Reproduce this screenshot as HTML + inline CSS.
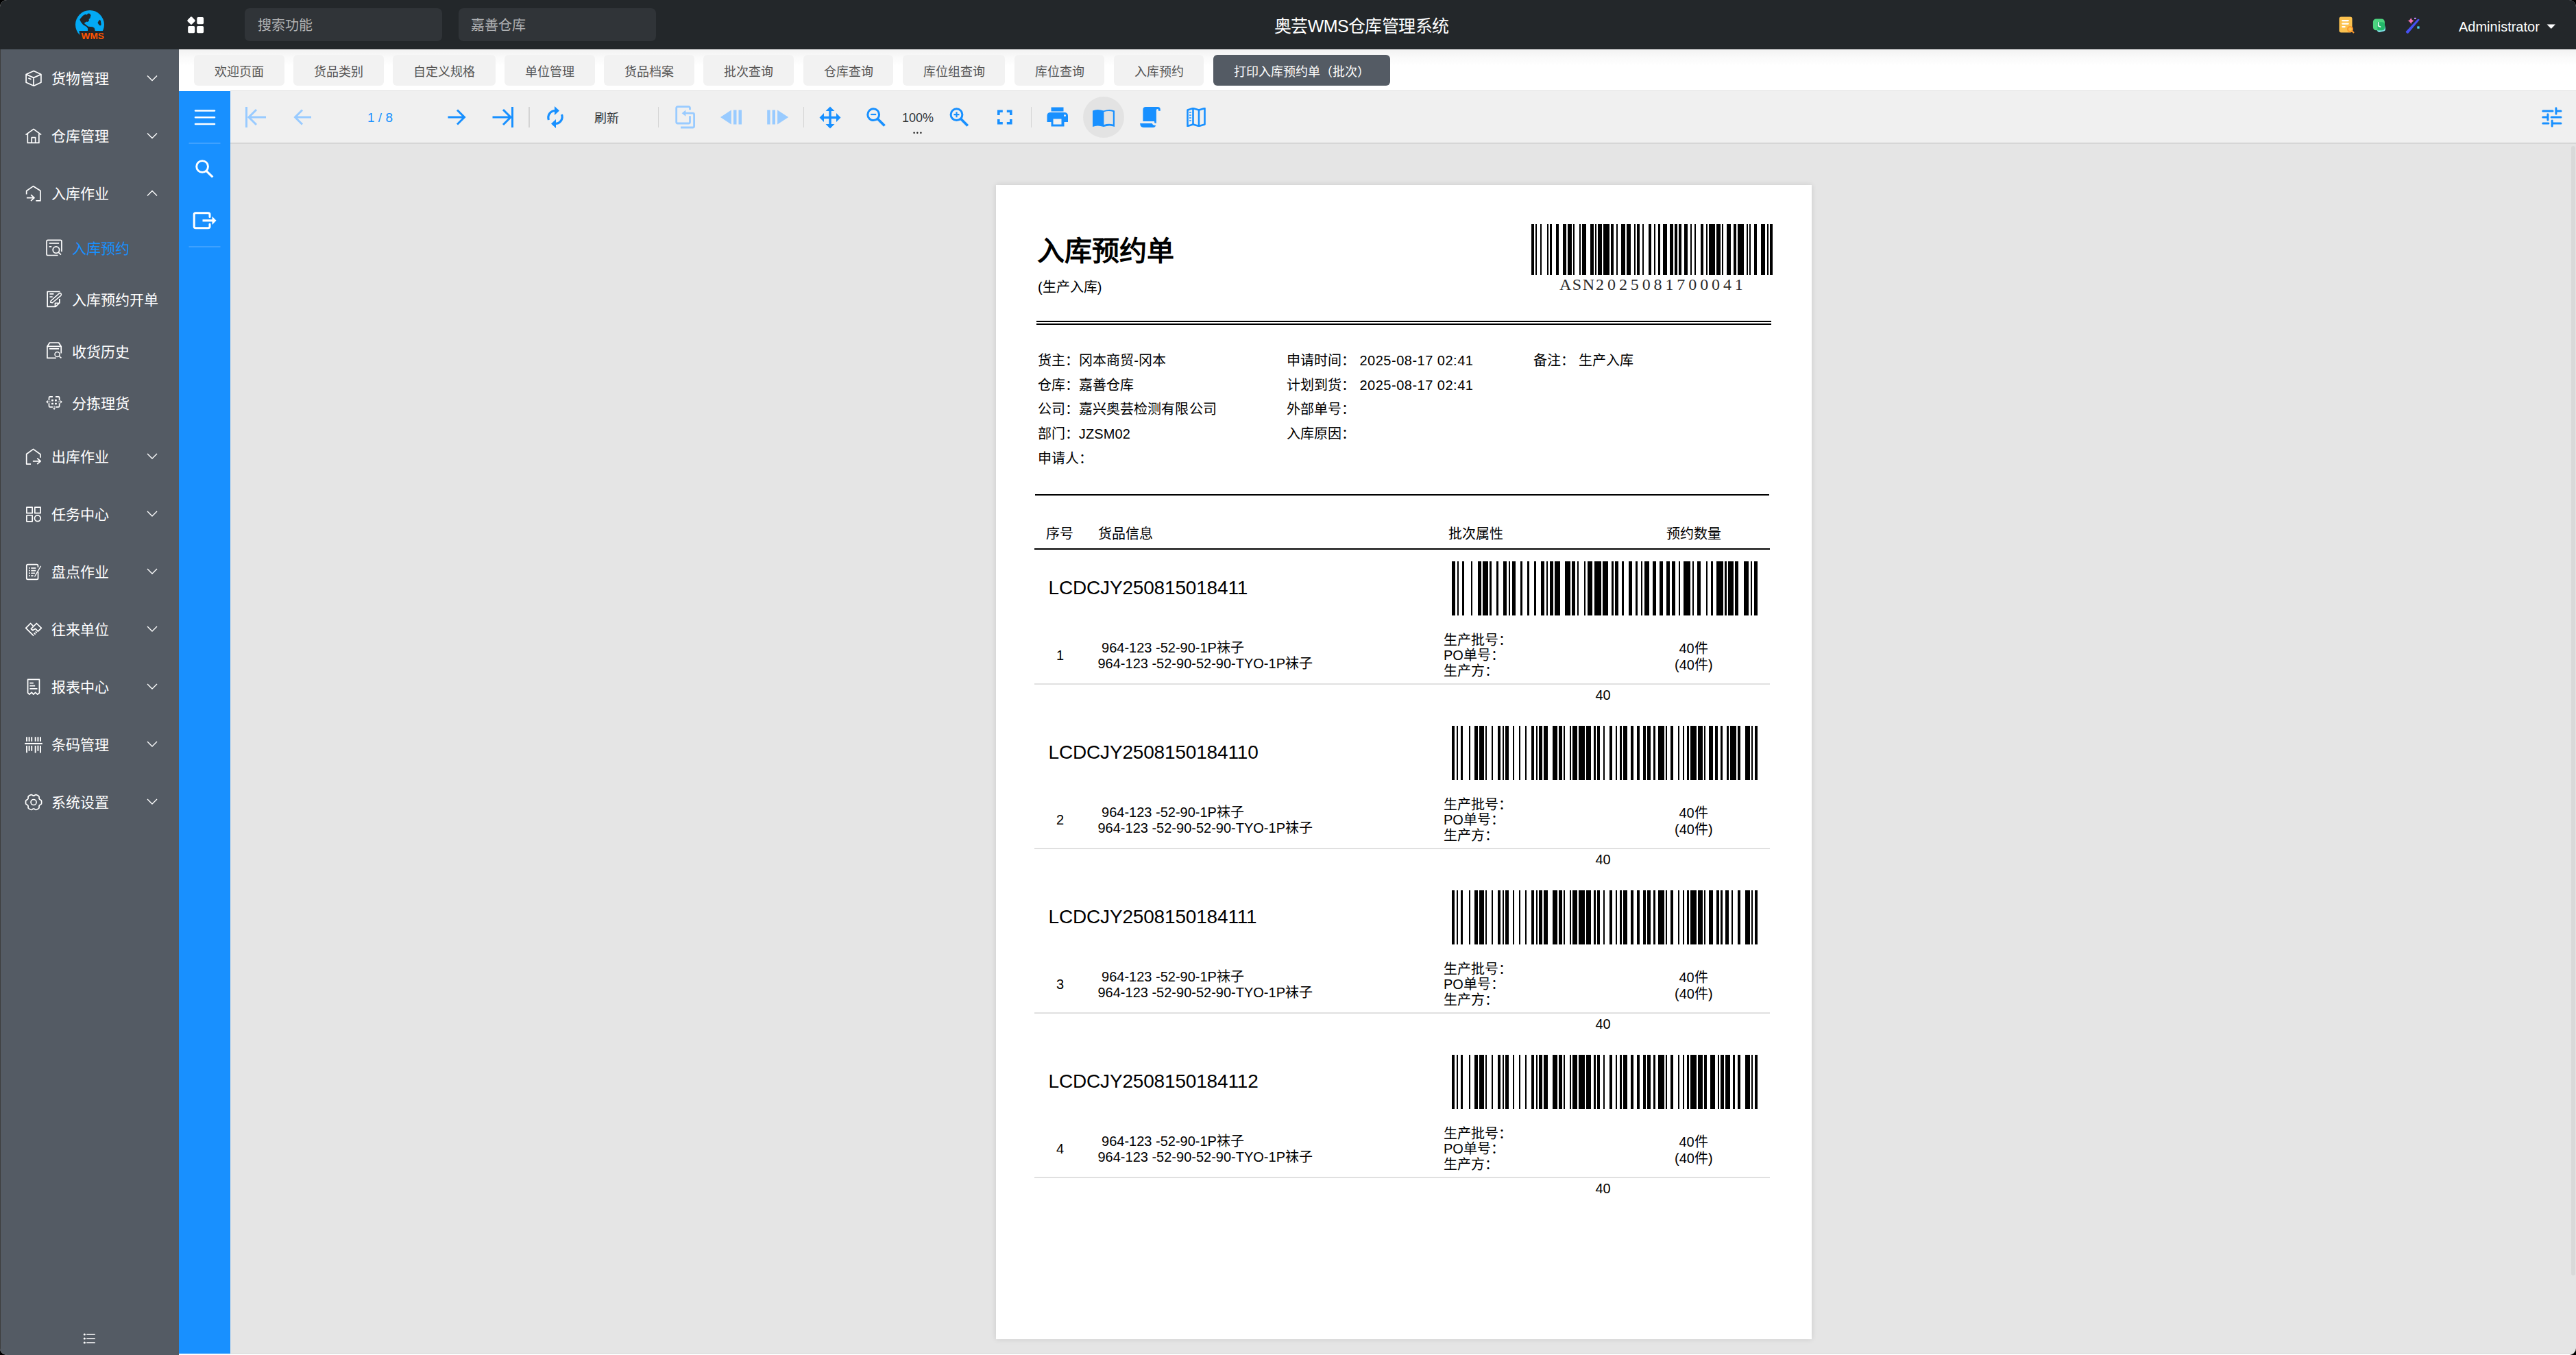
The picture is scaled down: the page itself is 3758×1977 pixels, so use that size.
<!DOCTYPE html>
<html lang="zh-CN"><head><meta charset="utf-8"><style>
html,body{margin:0;padding:0;}
body{width:3758px;height:1977px;overflow:hidden;position:relative;background:#000;font-family:'Liberation Sans', sans-serif;}
svg{display:block}
</style></head><body>
<div style="position:absolute;left:0;top:0;width:3758px;height:1977px;overflow:hidden;border-radius:10px;background:#e5e5e5">
<div style="position:absolute;left:0px;top:0px;width:3758px;height:72px;background:#23272a;"></div>
<svg style="position:absolute;left:105px;top:10px" width="55" height="52" viewBox="0 0 55 52">
<defs><clipPath id="lc"><rect x="0" y="0" width="55" height="34.9"/><polygon points="0,34.9 10.4,34.9 11.5,41.5 0,41.5"/></clipPath></defs>
<circle cx="26" cy="26" r="21" fill="#03a9f4" clip-path="url(#lc)"/>
<path d="M11.3 18.8 L12.7 16.5 L16.1 12.7 L19.2 11.1 L21.5 11.5 L23.8 9.6 L26.1 10 L27.6 12.3 L26.9 14.6 L26.5 16.5 L24.6 18 L25 20 L23 21.9 L21.5 21.5 L18 23.4 L18.4 24.6 L21.5 26.9 L23.8 28.8 L29.9 29.2 L32.6 30.7 L33.4 33.4 L33.8 35 L23 35 L23 31.5 L21.5 29.2 L16.1 26.1 L13.1 22.3 Z" fill="#23272a"/>
<path d="M40.3 18.8 L41.8 20.3 L42.6 25 L42.2 27.3 L39.9 26.9 L37.6 23.4 L38 21.9 Z" fill="#23272a"/>
<text x="13.6" y="46.8" font-family="Liberation Sans" font-weight="bold" font-size="13" fill="#ff5500" textLength="33.4" lengthAdjust="spacingAndGlyphs">WMS</text>
</svg><svg style="position:absolute;left:266px;top:18px" width="38" height="36" viewBox="0 0 38 36">
<rect x="8.5" y="7.6" width="9" height="9" rx="1.6" fill="#fff" transform="rotate(45 13 12.1)"/>
<rect x="21.3" y="7" width="9.8" height="10.3" rx="1.8" fill="#fff"/>
<rect x="8.2" y="19.9" width="10" height="10.3" rx="1.8" fill="#fff"/>
<rect x="21.1" y="19.9" width="10" height="10.3" rx="1.8" fill="#fff"/>
</svg><div style="position:absolute;left:357px;top:12px;width:288px;height:48px;background:#303438;border-radius:7px"></div>
<div style="position:absolute;left:669px;top:12px;width:288px;height:48px;background:#303438;border-radius:7px"></div>
<div style="position:absolute;left:375.5px;top:22.00px;line-height:30.0px;font-size:20px;color:#aeb0b2;font-weight:350;font-family:'Liberation Sans', sans-serif;white-space:nowrap;">搜索功能</div>
<div style="position:absolute;left:686.5px;top:22.00px;line-height:30.0px;font-size:20px;color:#aeb0b2;font-weight:350;font-family:'Liberation Sans', sans-serif;white-space:nowrap;">嘉善仓库</div>
<div style="position:absolute;left:1859px;top:19.75px;line-height:37.5px;font-size:25px;color:#fff;font-weight:350;font-family:'Liberation Sans', sans-serif;white-space:nowrap;letter-spacing:-0.6px">奥芸WMS仓库管理系统</div>
<div style="position:absolute;left:3587px;top:23.50px;line-height:30.0px;font-size:20px;color:#fff;font-weight:350;font-family:'Liberation Sans', sans-serif;white-space:nowrap;">Administrator</div>
<svg style="position:absolute;left:3715px;top:35px" width="14" height="8" viewBox="0 0 14 8"><path d="M0.5 0.5 H13 L6.75 7 Z" fill="#fff"/></svg><svg style="position:absolute;left:3412px;top:24px" width="24" height="25" viewBox="0 0 24 25">
<rect x="0.5" y="0.5" width="19" height="23" rx="3" fill="#fcc24f"/>
<rect x="4.2" y="5" width="10.6" height="2.2" rx="1.1" fill="#fff"/><rect x="4.2" y="9.5" width="10.6" height="2.2" rx="1.1" fill="#fff"/><rect x="4.2" y="14" width="5.6" height="2.2" rx="1.1" fill="#fff"/>
<circle cx="16.5" cy="18.5" r="3.5" fill="none" stroke="#ff9a2e" stroke-width="2"/><path d="M19 21 L22 24" stroke="#ff9a2e" stroke-width="2"/>
</svg><svg style="position:absolute;left:3455px;top:20px" width="35" height="35" viewBox="3455 20 35 35">
<rect x="3467" y="33" width="12.5" height="13.5" rx="4" fill="#7fdde6" transform="rotate(-12 3473 39.5)"/>
<rect x="3461.9" y="27.4" width="17" height="16.8" rx="4.5" fill="#4cd47f"/>
<path d="M3468 32.2 H3475 Q3478.9 32.2 3478.9 36 V40.2 Q3478.9 44.2 3474.9 44.2 H3468.5 Z" fill="#22b869"/>
<path d="M3469.6 32.8 V37.8 L3472.8 39.3" stroke="#fff" stroke-width="1.5" fill="none" stroke-linecap="round"/>
</svg><svg style="position:absolute;left:3509px;top:24px" width="23" height="26" viewBox="0 0 23 26">
<path d="M0.6 22.2 L17.6 4.3 Q19.5 3.0 20.7 5.0 L4.4 24.6 Q2.0 25.8 0.6 22.2 Z" fill="#4550f2"/>
<path d="M8.2 1.6 Q9 5.8 13.2 6.6 Q9 7.4 8.2 11.6 Q7.4 7.4 3.2 6.6 Q7.4 5.8 8.2 1.6 Z" fill="#f472b6"/>
<rect x="13.1" y="1.7" width="2.6" height="2.4" rx="0.4" fill="#c084fc"/>
<rect x="17.3" y="14.4" width="3.3" height="3.3" fill="#4fd6f2"/>
</svg><div style="position:absolute;left:0px;top:72px;width:261px;height:1905px;background:#545b64;"></div>
<div style="position:absolute;left:0px;top:72px;width:1px;height:1905px;background:#3d3d3d;"></div>
<svg style="position:absolute;left:33px;top:98px" width="32" height="32" viewBox="0 0 1355 1355" stroke="#fff" stroke-width="72" fill="none" stroke-linejoin="round" stroke-linecap="butt"><path d="M215 445 L690 230 L1140 445 V940 L690 1150 L215 940 Z M215 445 L680 650 L1140 445 M680 650 V1150 M355 680 L530 755"/></svg>
<div style="position:absolute;left:75px;top:99.25px;line-height:31.5px;font-size:21px;color:#fff;font-weight:350;font-family:'Liberation Sans', sans-serif;white-space:nowrap;">货物管理</div>
<svg style="position:absolute;left:33px;top:182px" width="32" height="32" viewBox="0 0 1355 1355" stroke="#fff" stroke-width="72" fill="none" stroke-linejoin="round" stroke-linecap="butt"><path d="M190 620 L680 270 L1150 620 M310 560 V1120 H1010 V560 M560 1100 V790 H790 V1100"/></svg>
<div style="position:absolute;left:75px;top:183.25px;line-height:31.5px;font-size:21px;color:#fff;font-weight:350;font-family:'Liberation Sans', sans-serif;white-space:nowrap;">仓库管理</div>
<svg style="position:absolute;left:33px;top:266px" width="32" height="32" viewBox="0 0 1355 1355" stroke="#fff" stroke-width="72" fill="none" stroke-linejoin="round" stroke-linecap="butt"><path d="M240 740 V530 L660 240 L1095 520 V1140 H820 M250 960 H720 M510 770 L720 960 L510 1150"/></svg>
<div style="position:absolute;left:75px;top:267.25px;line-height:31.5px;font-size:21px;color:#fff;font-weight:350;font-family:'Liberation Sans', sans-serif;white-space:nowrap;">入库作业</div>
<svg style="position:absolute;left:33px;top:649px" width="32" height="32" viewBox="0 0 1355 1355" stroke="#fff" stroke-width="72" fill="none" stroke-linejoin="round" stroke-linecap="butt"><path d="M510 1190 H240 V570 L660 270 L1095 580 V790 M630 1010 H1110 M900 830 L1110 1010 L900 1190"/></svg>
<div style="position:absolute;left:75px;top:650.75px;line-height:31.5px;font-size:21px;color:#fff;font-weight:350;font-family:'Liberation Sans', sans-serif;white-space:nowrap;">出库作业</div>
<svg style="position:absolute;left:33px;top:733px" width="32" height="32" viewBox="0 0 1355 1355" stroke="#fff" stroke-width="72" fill="none" stroke-linejoin="round" stroke-linecap="butt"><rect x="250" y="300" width="350" height="365"/><rect x="755" y="300" width="350" height="365"/><rect x="250" y="805" width="350" height="375"/><circle cx="925" cy="985" r="185"/></svg>
<div style="position:absolute;left:75px;top:734.75px;line-height:31.5px;font-size:21px;color:#fff;font-weight:350;font-family:'Liberation Sans', sans-serif;white-space:nowrap;">任务中心</div>
<svg style="position:absolute;left:33px;top:817px" width="32" height="32" viewBox="0 0 1355 1355" stroke="#fff" stroke-width="72" fill="none" stroke-linejoin="round" stroke-linecap="butt"><path d="M950 450 V360 Q950 280 870 280 H320 Q245 280 245 360 V1130 Q245 1200 320 1200 H880 Q955 1200 955 1130 V720 M520 500 H820 M520 660 H820 M520 815 H760 M520 975 H660" /><path d="M740 1030 L1130 370" stroke-width="58"/><g fill="#fff" stroke="none"><rect x="380" y="465" width="80" height="70"/><rect x="380" y="625" width="80" height="70"/><rect x="380" y="780" width="80" height="70"/><rect x="380" y="940" width="80" height="70"/></g></svg>
<div style="position:absolute;left:75px;top:818.75px;line-height:31.5px;font-size:21px;color:#fff;font-weight:350;font-family:'Liberation Sans', sans-serif;white-space:nowrap;">盘点作业</div>
<svg style="position:absolute;left:33px;top:901px" width="32" height="32" viewBox="0 0 1355 1355" stroke="#fff" stroke-width="72" fill="none" stroke-linejoin="round" stroke-linecap="butt"><path d="M680 1130 L200 650 L490 360 L640 510 M860 360 L1160 650 L950 850 L790 690 L620 790 L520 700 Z M700 950 L790 1040 M790 860 L880 950"/></svg>
<div style="position:absolute;left:75px;top:902.75px;line-height:31.5px;font-size:21px;color:#fff;font-weight:350;font-family:'Liberation Sans', sans-serif;white-space:nowrap;">往来单位</div>
<svg style="position:absolute;left:33px;top:985px" width="32" height="32" viewBox="0 0 1355 1355" stroke="#fff" stroke-width="72" fill="none" stroke-linejoin="round" stroke-linecap="butt"><path d="M320 1100 V270 H1035 V1100 L920 1190 L790 1070 L670 1190 L560 1070 L420 1190 Z M440 490 H670 M440 665 H770 M440 845 H910"/></svg>
<div style="position:absolute;left:75px;top:986.75px;line-height:31.5px;font-size:21px;color:#fff;font-weight:350;font-family:'Liberation Sans', sans-serif;white-space:nowrap;">报表中心</div>
<svg style="position:absolute;left:33px;top:1069px" width="32" height="32" viewBox="0 0 1355 1355" stroke="#fff" stroke-width="72" fill="none" stroke-linejoin="round" stroke-linecap="butt"><path d="M130 675 H1220" stroke-width="85"/><path d="M255 260 V545 M405 260 V545 M560 260 V545 M790 260 V545 M950 260 V545 M1100 260 V545 M255 800 V1240 M405 800 V1130 M560 800 V1130 M790 800 V1250 M950 790 V1130 M1100 800 V1250" stroke-width="80"/></svg>
<div style="position:absolute;left:75px;top:1070.75px;line-height:31.5px;font-size:21px;color:#fff;font-weight:350;font-family:'Liberation Sans', sans-serif;white-space:nowrap;">条码管理</div>
<svg style="position:absolute;left:33px;top:1153px" width="32" height="32" viewBox="0 0 1355 1355" stroke="#fff" stroke-width="72" fill="none" stroke-linejoin="round" stroke-linecap="butt"><path d="M1170 740 L1169 766 L1167 791 L1164 817 L1159 842 L1140 863 L1114 881 L1088 896 L1061 909 L1045 926 L1035 945 L1024 963 L1017 985 L1019 1015 L1019 1046 L1017 1077 L1008 1104 L988 1121 L968 1136 L947 1151 L925 1164 L902 1177 L879 1188 L856 1197 L831 1206 L803 1200 L775 1187 L748 1171 L724 1154 L701 1149 L680 1150 L659 1149 L636 1154 L612 1171 L585 1187 L557 1200 L529 1206 L504 1197 L481 1188 L458 1177 L435 1164 L413 1151 L392 1136 L372 1121 L352 1104 L343 1077 L341 1046 L341 1015 L343 985 L336 963 L325 945 L315 926 L299 909 L272 896 L246 881 L220 863 L201 842 L196 817 L193 791 L191 766 L190 740 L191 714 L193 689 L196 663 L201 638 L220 617 L246 599 L272 584 L299 571 L315 554 L325 535 L336 517 L343 495 L341 465 L341 434 L343 403 L352 376 L372 359 L392 344 L413 329 L435 316 L458 303 L481 292 L504 283 L529 274 L557 280 L585 293 L612 309 L636 326 L659 331 L680 330 L701 331 L724 326 L748 309 L775 293 L803 280 L831 274 L856 283 L879 292 L902 303 L925 316 L947 329 L968 344 L988 359 L1008 376 L1017 403 L1019 434 L1019 465 L1017 495 L1024 517 L1035 535 L1045 554 L1061 571 L1088 584 L1114 599 L1140 617 L1159 638 L1164 663 L1167 689 L1169 714 Z"/><circle cx="680" cy="740" r="170" stroke-width="70"/></svg>
<div style="position:absolute;left:75px;top:1154.75px;line-height:31.5px;font-size:21px;color:#fff;font-weight:350;font-family:'Liberation Sans', sans-serif;white-space:nowrap;">系统设置</div>
<svg style="position:absolute;left:0;top:0" width="261" height="1977"><path d="M215 110.5 L222 117.5 L229 110.5 M215 194.5 L222 201.5 L229 194.5 M215 285.5 L222 278.5 L229 285.5 M215 662.0 L222 669.0 L229 662.0 M215 746.0 L222 753.0 L229 746.0 M215 830.0 L222 837.0 L229 830.0 M215 914.0 L222 921.0 L229 914.0 M215 998.0 L222 1005.0 L229 998.0 M215 1082.0 L222 1089.0 L229 1082.0 M215 1166.0 L222 1173.0 L229 1166.0" stroke="#fff" stroke-width="1.4" fill="none"/></svg>
<svg style="position:absolute;left:63px;top:345px" width="32" height="32" viewBox="0 0 1355 1355" stroke="#fff" stroke-width="72" fill="none" stroke-linejoin="round" stroke-linecap="butt"><path d="M915 1165 H290 Q215 1165 215 1090 V305 Q215 230 290 230 H1065 Q1140 230 1140 305 V940 M370 420 H980 M370 630 H520 M950 985 L1100 1125"/><circle cx="800" cy="830" r="200"/></svg>
<div style="position:absolute;left:104.5px;top:346.75px;line-height:31.5px;font-size:21px;color:#1890ff;font-weight:350;font-family:'Liberation Sans', sans-serif;white-space:nowrap;">入库预约</div>
<svg style="position:absolute;left:63px;top:421px" width="32" height="32" viewBox="0 0 1355 1355" stroke="#fff" stroke-width="72" fill="none" stroke-linejoin="round" stroke-linecap="butt"><path d="M1040 190 H260 V1120 H760 M1010 640 V880 L760 1130 M740 1120 V900 H980 M400 330 H650 M400 510 H580"/><path d="M455 860 L470 760 L985 300 Q1050 250 1105 320 Q1150 390 1090 440 L570 880 Z" stroke-width="62"/></svg>
<div style="position:absolute;left:104.5px;top:422.25px;line-height:31.5px;font-size:21px;color:#fff;font-weight:350;font-family:'Liberation Sans', sans-serif;white-space:nowrap;">入库预约开单</div>
<svg style="position:absolute;left:63px;top:496px" width="32" height="32" viewBox="0 0 1355 1355" stroke="#fff" stroke-width="72" fill="none" stroke-linejoin="round" stroke-linecap="butt"><path d="M800 1120 H250 V400 L400 170 H960 L1110 400 V830 M250 400 H1110 M380 545 H980 M1000 1020 L1120 1120"/><circle cx="870" cy="890" r="150" stroke-width="60"/></svg>
<div style="position:absolute;left:104.5px;top:497.75px;line-height:31.5px;font-size:21px;color:#fff;font-weight:350;font-family:'Liberation Sans', sans-serif;white-space:nowrap;">收货历史</div>
<svg style="position:absolute;left:63px;top:571px" width="32" height="32" viewBox="0 0 1355 1355" stroke="#fff" stroke-width="72" fill="none" stroke-linejoin="round" stroke-linecap="butt"><path d="M590 330 H420 Q360 330 360 390 V560 M760 330 H940 Q1000 330 1000 390 V560 M360 730 V910 Q360 970 420 970 H590 M1000 730 V910 Q1000 970 940 970 H760"/><g fill="#fff" stroke="none"><rect x="510" y="500" width="120" height="110" rx="25"/><rect x="720" y="500" width="120" height="110" rx="25"/><rect x="510" y="705" width="120" height="110" rx="25"/><rect x="720" y="705" width="120" height="110" rx="25"/><path d="M170 650 L290 550 V750 Z M1180 650 L1070 550 V750 Z M680 1140 L590 1040 H770 Z"/></g><path d="M290 650 H450 M900 650 H1070 M680 890 V1040" stroke-width="40"/></svg>
<div style="position:absolute;left:104.5px;top:572.75px;line-height:31.5px;font-size:21px;color:#fff;font-weight:350;font-family:'Liberation Sans', sans-serif;white-space:nowrap;">分拣理货</div>
<svg style="position:absolute;left:121px;top:1945px" width="20" height="17" viewBox="0 0 20 17" fill="#fff">
<circle cx="2.3" cy="2" r="1.6"/><circle cx="2.3" cy="8" r="1.6"/><circle cx="2.3" cy="14" r="1.6"/>
<rect x="5" y="1.2" width="13" height="1.6" rx=".8"/><rect x="5" y="7.2" width="13" height="1.6" rx=".8"/><rect x="5" y="13.2" width="13" height="1.6" rx=".8"/></svg><div style="position:absolute;left:261px;top:72px;width:3497px;height:61px;background:#fff;background:linear-gradient(#f2f2f2 0px,#fafafa 12px,#fff 24px)"></div>
<div style="position:absolute;left:283.0px;top:80px;width:131.7px;height:45.3px;background:#f2f2f2;border-radius:6px;"></div>
<div style="position:absolute;left:313px;top:91.50px;line-height:27.0px;font-size:18px;color:#555;font-weight:350;font-family:'Liberation Sans', sans-serif;white-space:nowrap;">欢迎页面</div>
<div style="position:absolute;left:428.0px;top:80px;width:131.7px;height:45.3px;background:#f2f2f2;border-radius:6px;"></div>
<div style="position:absolute;left:458px;top:91.50px;line-height:27.0px;font-size:18px;color:#555;font-weight:350;font-family:'Liberation Sans', sans-serif;white-space:nowrap;">货品类别</div>
<div style="position:absolute;left:573.0px;top:80px;width:149.8px;height:45.3px;background:#f2f2f2;border-radius:6px;"></div>
<div style="position:absolute;left:603px;top:91.50px;line-height:27.0px;font-size:18px;color:#555;font-weight:350;font-family:'Liberation Sans', sans-serif;white-space:nowrap;">自定义规格</div>
<div style="position:absolute;left:735.8px;top:80px;width:132.0px;height:45.3px;background:#f2f2f2;border-radius:6px;"></div>
<div style="position:absolute;left:765.8px;top:91.50px;line-height:27.0px;font-size:18px;color:#555;font-weight:350;font-family:'Liberation Sans', sans-serif;white-space:nowrap;">单位管理</div>
<div style="position:absolute;left:881.0px;top:80px;width:132.0px;height:45.3px;background:#f2f2f2;border-radius:6px;"></div>
<div style="position:absolute;left:911px;top:91.50px;line-height:27.0px;font-size:18px;color:#555;font-weight:350;font-family:'Liberation Sans', sans-serif;white-space:nowrap;">货品档案</div>
<div style="position:absolute;left:1026.0px;top:80px;width:132.2px;height:45.3px;background:#f2f2f2;border-radius:6px;"></div>
<div style="position:absolute;left:1056px;top:91.50px;line-height:27.0px;font-size:18px;color:#555;font-weight:350;font-family:'Liberation Sans', sans-serif;white-space:nowrap;">批次查询</div>
<div style="position:absolute;left:1172.0px;top:80px;width:131.0px;height:45.3px;background:#f2f2f2;border-radius:6px;"></div>
<div style="position:absolute;left:1202px;top:91.50px;line-height:27.0px;font-size:18px;color:#555;font-weight:350;font-family:'Liberation Sans', sans-serif;white-space:nowrap;">仓库查询</div>
<div style="position:absolute;left:1317.0px;top:80px;width:149.0px;height:45.3px;background:#f2f2f2;border-radius:6px;"></div>
<div style="position:absolute;left:1347px;top:91.50px;line-height:27.0px;font-size:18px;color:#555;font-weight:350;font-family:'Liberation Sans', sans-serif;white-space:nowrap;">库位组查询</div>
<div style="position:absolute;left:1480.0px;top:80px;width:130.7px;height:45.3px;background:#f2f2f2;border-radius:6px;"></div>
<div style="position:absolute;left:1510px;top:91.50px;line-height:27.0px;font-size:18px;color:#555;font-weight:350;font-family:'Liberation Sans', sans-serif;white-space:nowrap;">库位查询</div>
<div style="position:absolute;left:1625.0px;top:80px;width:131.0px;height:45.3px;background:#f2f2f2;border-radius:6px;"></div>
<div style="position:absolute;left:1655px;top:91.50px;line-height:27.0px;font-size:18px;color:#555;font-weight:350;font-family:'Liberation Sans', sans-serif;white-space:nowrap;">入库预约</div>
<div style="position:absolute;left:1770.0px;top:80px;width:258.0px;height:45.3px;background:#545b64;border-radius:6px;"></div>
<div style="position:absolute;left:1800px;top:91.50px;line-height:27.0px;font-size:18px;color:#fff;font-weight:350;font-family:'Liberation Sans', sans-serif;white-space:nowrap;">打印入库预约单（批次）</div>
<div style="position:absolute;left:261px;top:133px;width:75px;height:1844px;background:#1890ff;"></div>
<div style="position:absolute;left:336px;top:132px;width:3422px;height:1px;background:#dcdcdc;"></div>
<div style="position:absolute;left:336px;top:133px;width:3422px;height:75px;background:#f0f0f0;"></div>
<div style="position:absolute;left:336px;top:208px;width:3422px;height:2px;background:#d6d6d6;"></div>
<svg style="position:absolute;left:261px;top:133px" width="75" height="260" viewBox="0 0 75 260" fill="none" stroke="#fff" stroke-linecap="round">
<path d="M24 28.5 H52 M24 38.2 H52 M24 48 H52" stroke-width="2.6"/>
<path d="M15 76 H60 M15 227 H60" stroke="#4ba6ff" stroke-width="1.5"/>
<circle cx="34.1" cy="110" r="8.4" stroke-width="2.9"/><path d="M40.2 116.6 L49.3 125.4" stroke-width="3.2" stroke-linecap="butt"/>
<path d="M45 183.5 V180 Q45 177.8 42.5 177.8 H24.5 Q22.2 177.8 22.2 180 V197.5 Q22.2 199.8 24.5 199.8 H42.5 Q45 199.8 45 197.5 V194" stroke-width="3"/>
<path d="M34.5 188.8 H49.5" stroke-width="3.2" stroke-linecap="butt"/><path d="M48.5 182.7 L54.5 188.8 L48.5 194.9 Z" fill="#fff" stroke="none"/>
</svg><svg style="position:absolute;left:357px;top:155px" width="34" height="32" viewBox="0 0 34 32" fill="none" stroke="#99cbff" stroke-width="3" stroke-linecap="butt" stroke-linejoin="miter"><path d="M2.5 1 V31 M6 16 H31 M17 5 L6 16 L17 27"/></svg>
<svg style="position:absolute;left:428px;top:158px" width="27" height="26" viewBox="0 0 27 26" fill="none" stroke="#99cbff" stroke-width="3" stroke-linecap="butt" stroke-linejoin="miter"><path d="M2.5 13 H26 M13 2.5 L2.5 13 L13 23.5"/></svg>
<div style="position:absolute;left:536px;top:158.25px;line-height:28.5px;font-size:19px;color:#1890ff;font-weight:350;font-family:'Liberation Sans', sans-serif;white-space:nowrap;">1 / 8</div>
<svg style="position:absolute;left:653px;top:158px" width="27" height="26" viewBox="0 0 27 26" fill="none" stroke="#1890ff" stroke-width="3" stroke-linecap="butt" stroke-linejoin="miter"><path d="M0.5 13 H24 M14 2.5 L24.5 13 L14 23.5"/></svg>
<svg style="position:absolute;left:718px;top:155px" width="33" height="32" viewBox="0 0 33 32" fill="none" stroke="#1890ff" stroke-width="3" stroke-linecap="butt" stroke-linejoin="miter"><path d="M0.5 16 H27 M16 5 L27 16 L16 27 M29.5 1 V31"/></svg>
<div style="position:absolute;left:771.25px;top:156px;width:1.5px;height:30px;background:#d4d4d4;"></div>
<div style="position:absolute;left:959.95px;top:156px;width:1.5px;height:30px;background:#d4d4d4;"></div>
<div style="position:absolute;left:1171.75px;top:156px;width:1.5px;height:30px;background:#d4d4d4;"></div>
<div style="position:absolute;left:1503.75px;top:156px;width:1.5px;height:30px;background:#d4d4d4;"></div>
<svg style="position:absolute;left:796px;top:154px" width="28" height="34" viewBox="0 0 28 34" fill="none"  stroke-linecap="butt" stroke-linejoin="miter"><path d="M4.5 21 A10 10 0 0 1 14 7.5 M23.5 13 A10 10 0 0 1 14 26.5" stroke="#1890ff" stroke-width="3.2" fill="none"/><path d="M13 1 L20 7.5 L13 14 Z M15 20 L8 26.5 L15 33 Z" fill="#1890ff"/></svg>
<div style="position:absolute;left:867px;top:159.50px;line-height:27.0px;font-size:18px;color:#333;font-weight:350;font-family:'Liberation Sans', sans-serif;white-space:nowrap;">刷新</div>
<svg style="position:absolute;left:980px;top:150px" width="40" height="42" viewBox="0 0 40 42" fill="none"  stroke-linecap="butt" stroke-linejoin="miter"><path d="M26.5 10.2 V7.7 Q26.5 5.7 24.5 5.7 H8.7 Q6.7 5.7 6.7 7.7 V28 Q6.7 30 8.7 30 H24.5 Q26.5 30 26.5 28 V19.2 M19.5 15.2 H30.6 Q32.6 15.2 32.6 17.2 V34 Q32.6 36 30.6 36 H13" stroke="#99cbff" stroke-width="2.8"/><path d="M14.6 15.2 L20.4 10.6 V19.8 Z" fill="#99cbff"/></svg>
<svg style="position:absolute;left:1050px;top:160px" width="33" height="22" viewBox="0 0 33 22" fill="none"  stroke-linecap="butt" stroke-linejoin="miter"><path d="M0.9 11 L16.9 0.6 V21.4 Z" fill="#99cbff"/><rect x="20" y="0.5" width="4.5" height="21" fill="#99cbff"/><rect x="27.5" y="0.5" width="4.5" height="21" fill="#99cbff"/></svg>
<svg style="position:absolute;left:1118px;top:160px" width="33" height="22" viewBox="0 0 33 22" fill="none"  stroke-linecap="butt" stroke-linejoin="miter"><rect x="1.2" y="0.5" width="4.4" height="21" fill="#99cbff"/><rect x="8.6" y="0.5" width="4.4" height="21" fill="#99cbff"/><path d="M16.1 0.6 L32.2 11 L16.1 21.4 Z" fill="#99cbff"/></svg>
<svg style="position:absolute;left:1195px;top:155px" width="32" height="33" viewBox="0 0 32 33" fill="none"  stroke-linecap="butt" stroke-linejoin="miter"><path d="M16 0.5 L22.5 7 H9.5 Z M16 32.5 L22.5 26 H9.5 Z M0.5 16.5 L7 10 V23 Z M31.5 16.5 L25 10 V23 Z" fill="#1890ff"/><path d="M16 5 V28 M5 16.5 H27" stroke="#1890ff" stroke-width="3.5"/></svg>
<svg style="position:absolute;left:1264px;top:157px" width="29" height="29" viewBox="0 0 29 29" fill="none"  stroke-linecap="butt" stroke-linejoin="miter"><circle cx="10.2" cy="10.2" r="8.4" stroke="#1890ff" stroke-width="3"/><path d="M16.5 16.5 L26.5 26.5" stroke="#1890ff" stroke-width="3.8"/><path d="M6.2 10 H14.2" stroke="#1890ff" stroke-width="2.2"/></svg>
<div style="position:absolute;left:1316px;top:159.00px;line-height:27.0px;font-size:18px;color:#333;font-weight:350;font-family:'Liberation Sans', sans-serif;white-space:nowrap;">100%</div>
<svg style="position:absolute;left:1330px;top:191px" width="16" height="6" viewBox="0 0 16 6" fill="#222"><circle cx="3.6" cy="2.8" r="1.25"/><circle cx="8.3" cy="2.8" r="1.25"/><circle cx="13.4" cy="2.8" r="1.25"/></svg><svg style="position:absolute;left:1385px;top:157px" width="29" height="29" viewBox="0 0 29 29" fill="none"  stroke-linecap="butt" stroke-linejoin="miter"><circle cx="10.5" cy="10.2" r="8.4" stroke="#1890ff" stroke-width="3"/><path d="M16.8 16.5 L26.8 26.5" stroke="#1890ff" stroke-width="3.8"/><path d="M6.5 10.2 H14.5 M10.5 6.2 V14.2" stroke="#1890ff" stroke-width="2.2"/></svg>
<svg style="position:absolute;left:1455px;top:160px" width="22" height="22" viewBox="0 0 22 22" fill="none"  stroke-linecap="butt" stroke-linejoin="miter"><path d="M1.8 8 V2.3 H7.8 M13.8 2.3 H19.8 V8 M19.8 14 V19.8 H13.8 M7.8 19.8 H1.8 V14" stroke="#1890ff" stroke-width="3.6"/></svg>
<svg style="position:absolute;left:1527px;top:156px" width="32" height="30" viewBox="0 0 32 30" fill="none"  stroke-linecap="butt" stroke-linejoin="miter"><rect x="6.5" y="0.5" width="18" height="6" fill="#1890ff"/><path d="M0.5 13 Q0.5 8 5.5 8 H25.5 Q31 8 31 13 V22 H25.5 V28.5 H6.5 V22 H0.5 Z" fill="#1890ff"/><rect x="9.5" y="17.5" width="12" height="8" fill="#f0f0f0"/><circle cx="26.5" cy="12.5" r="1.5" fill="#f0f0f0"/></svg>
<div style="position:absolute;left:1580px;top:141px;width:60px;height:60px;background:#e3e3e3;border-radius:50%"></div>
<svg style="position:absolute;left:1593px;top:159px" width="34" height="27" viewBox="0 0 34 27" fill="none"  stroke-linecap="butt" stroke-linejoin="miter"><path d="M1 2.5 Q8 -0.5 17 2.5 V26 Q8 23 1 26 Z" fill="#1890ff"/><path d="M17 2.5 Q26 -0.5 33 2.5 V26 Q26 23 17 26 Z" fill="#1890ff"/><path d="M17.4 4.2 Q24.5 1.8 30.8 4 V22.6 Q24.5 20.8 17.4 23 Z" fill="#e3e3e3"/></svg>
<svg style="position:absolute;left:1655px;top:150px" width="45" height="42" viewBox="0 0 45 42" fill="none"  stroke-linecap="butt" stroke-linejoin="miter"><path d="M12.4 10.2 Q12.4 6 16.4 6 H34.1 Q37.8 6 37.8 10.2 V11.8 H35 V10.2 Q34.6 9 33.5 9 Q31.9 9.2 31.9 10.5 V29.7 H29.7 Q29 29 29 27 H12.4 Z M8.1 30 H25.7 Q26.8 32.2 27.9 32.5 L31.3 33.3 Q30 35.9 27.9 35.9 H13 Q8.5 35.9 8.1 30 Z" fill="#1890ff"/></svg>
<svg style="position:absolute;left:1731px;top:157px" width="28" height="28" viewBox="0 0 28 28" fill="none"  stroke-linecap="butt" stroke-linejoin="miter"><path d="M1.5 3.5 L9.5 1 L18 3.5 L26.5 1 V24.5 L18 27 L9.5 24.5 L1.5 27 Z" stroke="#1890ff" stroke-width="2.6" stroke-linejoin="round"/><path d="M9.5 1 V24.5 M18 3.5 V27" stroke="#1890ff" stroke-width="2.6"/><path d="M4 7 H7 M4 11 H7 M4 15 H7 M4 19 H7" stroke="#1890ff" stroke-width="1.6"/></svg>
<svg style="position:absolute;left:3700px;top:148px" width="45" height="44" viewBox="0 0 45 44" fill="none" stroke="#1890ff" stroke-width="3" stroke-linecap="round"><path d="M9.7 14 H24 M28.9 14 H36 M28.9 9.7 V17.9 M9.7 22.9 H16.9 M16.9 18.8 V27 M22.1 22.9 H36 M9.7 32 H17.9 M23.1 27.9 V36 M23.1 32 H36"/></svg><div style="position:absolute;left:3751px;top:213px;width:6px;height:1648px;background:#d9d9d9;border-radius:3px"></div>
<div style="position:absolute;left:336px;top:1973.5px;width:3422px;height:1.5px;background:#d4d4d4;"></div>
<div style="position:absolute;left:261px;top:1975px;width:3497px;height:2px;background:#fdfdfd;"></div>
<div style="position:absolute;left:1453px;top:270px;width:1190px;height:1684px;background:#fff;box-shadow:0 0 8px rgba(0,0,0,0.12)"></div>
<div style="position:absolute;left:1513px;top:336.00px;line-height:60.0px;font-size:40px;color:#000;font-weight:bold;font-family:'Liberation Sans', sans-serif;white-space:nowrap;">入库预约单</div>
<div style="position:absolute;left:1514px;top:403.50px;line-height:30.0px;font-size:20px;color:#000;font-weight:350;font-family:'Liberation Sans', sans-serif;white-space:nowrap;">(生产入库)</div>
<svg style="position:absolute;left:2234px;top:327px" width="352" height="74" viewBox="0 0 167 1" preserveAspectRatio="none" shape-rendering="crispEdges"><rect x="0" width="2" height="1"/><rect x="3" width="1" height="1"/><rect x="6" width="1" height="1"/><rect x="11" width="1" height="1"/><rect x="13" width="1" height="1"/><rect x="17" width="2" height="1"/><rect x="22" width="2" height="1"/><rect x="25" width="3" height="1"/><rect x="29" width="1" height="1"/><rect x="33" width="1" height="1"/><rect x="35" width="3" height="1"/><rect x="41" width="2" height="1"/><rect x="44" width="1" height="1"/><rect x="46" width="3" height="1"/><rect x="50" width="4" height="1"/><rect x="55" width="2" height="1"/><rect x="59" width="1" height="1"/><rect x="62" width="3" height="1"/><rect x="66" width="3" height="1"/><rect x="71" width="1" height="1"/><rect x="73" width="2" height="1"/><rect x="77" width="1" height="1"/><rect x="81" width="2" height="1"/><rect x="85" width="1" height="1"/><rect x="88" width="1" height="1"/><rect x="91" width="3" height="1"/><rect x="96" width="2" height="1"/><rect x="99" width="2" height="1"/><rect x="102" width="2" height="1"/><rect x="106" width="2" height="1"/><rect x="110" width="1" height="1"/><rect x="113" width="1" height="1"/><rect x="117" width="2" height="1"/><rect x="121" width="1" height="1"/><rect x="123" width="4" height="1"/><rect x="128" width="3" height="1"/><rect x="132" width="1" height="1"/><rect x="135" width="3" height="1"/><rect x="140" width="2" height="1"/><rect x="143" width="4" height="1"/><rect x="149" width="1" height="1"/><rect x="151" width="1" height="1"/><rect x="154" width="2" height="1"/><rect x="159" width="3" height="1"/><rect x="163" width="1" height="1"/><rect x="165" width="2" height="1"/></svg><div style="position:absolute;left:2275px;top:397.00px;line-height:36.0px;font-size:24px;color:#2a2a2a;font-weight:350;font-family:'Liberation Serif', serif;white-space:nowrap;font-weight:normal"><span style="display:inline-block;width:16.9px;text-align:center">A</span><span style="display:inline-block;width:16.9px;text-align:center">S</span><span style="display:inline-block;width:16.9px;text-align:center">N</span><span style="display:inline-block;width:16.9px;text-align:center">2</span><span style="display:inline-block;width:16.9px;text-align:center">0</span><span style="display:inline-block;width:16.9px;text-align:center">2</span><span style="display:inline-block;width:16.9px;text-align:center">5</span><span style="display:inline-block;width:16.9px;text-align:center">0</span><span style="display:inline-block;width:16.9px;text-align:center">8</span><span style="display:inline-block;width:16.9px;text-align:center">1</span><span style="display:inline-block;width:16.9px;text-align:center">7</span><span style="display:inline-block;width:16.9px;text-align:center">0</span><span style="display:inline-block;width:16.9px;text-align:center">0</span><span style="display:inline-block;width:16.9px;text-align:center">0</span><span style="display:inline-block;width:16.9px;text-align:center">4</span><span style="display:inline-block;width:16.9px;text-align:center">1</span></div>
<div style="position:absolute;left:1512px;top:468px;width:1072px;height:2px;background:#000;"></div>
<div style="position:absolute;left:1512px;top:472px;width:1072px;height:2px;background:#000;"></div>
<div style="position:absolute;left:1513.5px;top:510.50px;line-height:30.0px;font-size:20px;color:#000;font-weight:350;font-family:'Liberation Sans', sans-serif;white-space:nowrap;letter-spacing:0.1px">货主：冈本商贸-冈本</div>
<div style="position:absolute;left:1513.5px;top:546.50px;line-height:30.0px;font-size:20px;color:#000;font-weight:350;font-family:'Liberation Sans', sans-serif;white-space:nowrap;letter-spacing:0.1px">仓库：嘉善仓库</div>
<div style="position:absolute;left:1513.5px;top:582.00px;line-height:30.0px;font-size:20px;color:#000;font-weight:350;font-family:'Liberation Sans', sans-serif;white-space:nowrap;letter-spacing:0.1px">公司：嘉兴奥芸检测有限公司</div>
<div style="position:absolute;left:1513.5px;top:617.70px;line-height:30.0px;font-size:20px;color:#000;font-weight:350;font-family:'Liberation Sans', sans-serif;white-space:nowrap;letter-spacing:0.1px">部门：JZSM02</div>
<div style="position:absolute;left:1513.5px;top:654.00px;line-height:30.0px;font-size:20px;color:#000;font-weight:350;font-family:'Liberation Sans', sans-serif;white-space:nowrap;letter-spacing:0.1px">申请人：</div>
<div style="position:absolute;left:1877px;top:510.50px;line-height:30.0px;font-size:20px;color:#000;font-weight:350;font-family:'Liberation Sans', sans-serif;white-space:nowrap;">申请时间：</div>
<div style="position:absolute;left:1983.5px;top:510.50px;line-height:30.0px;font-size:20px;color:#000;font-weight:350;font-family:'Liberation Sans', sans-serif;white-space:nowrap;letter-spacing:0.5px">2025-08-17 02:41</div>
<div style="position:absolute;left:1877px;top:546.50px;line-height:30.0px;font-size:20px;color:#000;font-weight:350;font-family:'Liberation Sans', sans-serif;white-space:nowrap;">计划到货：</div>
<div style="position:absolute;left:1983.5px;top:546.50px;line-height:30.0px;font-size:20px;color:#000;font-weight:350;font-family:'Liberation Sans', sans-serif;white-space:nowrap;letter-spacing:0.5px">2025-08-17 02:41</div>
<div style="position:absolute;left:1877px;top:582.00px;line-height:30.0px;font-size:20px;color:#000;font-weight:350;font-family:'Liberation Sans', sans-serif;white-space:nowrap;">外部单号：</div>
<div style="position:absolute;left:1877px;top:617.70px;line-height:30.0px;font-size:20px;color:#000;font-weight:350;font-family:'Liberation Sans', sans-serif;white-space:nowrap;">入库原因：</div>
<div style="position:absolute;left:2237px;top:510.50px;line-height:30.0px;font-size:20px;color:#000;font-weight:350;font-family:'Liberation Sans', sans-serif;white-space:nowrap;">备注：</div>
<div style="position:absolute;left:2303px;top:510.50px;line-height:30.0px;font-size:20px;color:#000;font-weight:350;font-family:'Liberation Sans', sans-serif;white-space:nowrap;">生产入库</div>
<div style="position:absolute;left:1510px;top:721px;width:1071px;height:2px;background:#000;"></div>
<div style="position:absolute;left:1525.5px;top:764.40px;line-height:30.0px;font-size:20px;color:#000;font-weight:500;font-family:'Liberation Sans', sans-serif;white-space:nowrap;">序号</div>
<div style="position:absolute;left:1601.5px;top:764.40px;line-height:30.0px;font-size:20px;color:#000;font-weight:500;font-family:'Liberation Sans', sans-serif;white-space:nowrap;">货品信息</div>
<div style="position:absolute;left:2112.5px;top:764.40px;line-height:30.0px;font-size:20px;color:#000;font-weight:500;font-family:'Liberation Sans', sans-serif;white-space:nowrap;">批次属性</div>
<div style="position:absolute;left:2431px;top:764.40px;line-height:30.0px;font-size:20px;color:#000;font-weight:500;font-family:'Liberation Sans', sans-serif;white-space:nowrap;">预约数量</div>
<div style="position:absolute;left:1509px;top:800px;width:1073px;height:2px;background:#000;"></div>
<div style="position:absolute;left:1529.5px;top:836.80px;line-height:42.0px;font-size:28px;color:#000;font-weight:350;font-family:'Liberation Sans', sans-serif;white-space:nowrap;letter-spacing:-0.17px">LCDCJY250815018411</div>
<svg style="position:absolute;left:2118px;top:819px" width="446" height="78.5" viewBox="0 0 178 1" preserveAspectRatio="none" shape-rendering="crispEdges"><rect x="0" width="2" height="1"/><rect x="3" width="1" height="1"/><rect x="6" width="1" height="1"/><rect x="11" width="1" height="1"/><rect x="15" width="2" height="1"/><rect x="18" width="3" height="1"/><rect x="22" width="1" height="1"/><rect x="26" width="1" height="1"/><rect x="30" width="2" height="1"/><rect x="33" width="1" height="1"/><rect x="35" width="2" height="1"/><rect x="40" width="1" height="1"/><rect x="44" width="1" height="1"/><rect x="48" width="1" height="1"/><rect x="52" width="2" height="1"/><rect x="55" width="1" height="1"/><rect x="57" width="2" height="1"/><rect x="60" width="3" height="1"/><rect x="66" width="3" height="1"/><rect x="70" width="2" height="1"/><rect x="73" width="1" height="1"/><rect x="77" width="1" height="1"/><rect x="79" width="3" height="1"/><rect x="83" width="4" height="1"/><rect x="88" width="3" height="1"/><rect x="93" width="1" height="1"/><rect x="95" width="2" height="1"/><rect x="99" width="1" height="1"/><rect x="103" width="2" height="1"/><rect x="107" width="1" height="1"/><rect x="110" width="1" height="1"/><rect x="112" width="3" height="1"/><rect x="117" width="2" height="1"/><rect x="121" width="2" height="1"/><rect x="125" width="2" height="1"/><rect x="128" width="2" height="1"/><rect x="132" width="1" height="1"/><rect x="135" width="4" height="1"/><rect x="140" width="1" height="1"/><rect x="143" width="2" height="1"/><rect x="148" width="1" height="1"/><rect x="151" width="1" height="1"/><rect x="154" width="4" height="1"/><rect x="159" width="1" height="1"/><rect x="161" width="3" height="1"/><rect x="165" width="2" height="1"/><rect x="170" width="3" height="1"/><rect x="174" width="1" height="1"/><rect x="176" width="2" height="1"/></svg><div style="position:absolute;left:1521.5px;top:940.50px;line-height:30.0px;font-size:20px;color:#000;font-weight:350;font-family:'Liberation Sans', sans-serif;white-space:nowrap;width:50px;text-align:center">1</div>
<div style="position:absolute;left:1601.5px;top:929.50px;line-height:30.0px;font-size:20px;color:#000;font-weight:350;font-family:'Liberation Sans', sans-serif;white-space:nowrap;">&nbsp;964-123 -52-90-1P袜子</div>
<div style="position:absolute;left:1601.5px;top:953.00px;line-height:30.0px;font-size:20px;color:#000;font-weight:350;font-family:'Liberation Sans', sans-serif;white-space:nowrap;">964-123 -52-90-52-90-TYO-1P袜子</div>
<div style="position:absolute;left:2106px;top:922.50px;line-height:22.6px;font-size:20px;color:#000;font-weight:350;font-family:'Liberation Sans', sans-serif;white-space:nowrap;">生产批号：</div>
<div style="position:absolute;left:2106px;top:945.20px;line-height:22.6px;font-size:20px;color:#000;font-weight:350;font-family:'Liberation Sans', sans-serif;white-space:nowrap;">PO单号：</div>
<div style="position:absolute;left:2106px;top:967.70px;line-height:22.6px;font-size:20px;color:#000;font-weight:350;font-family:'Liberation Sans', sans-serif;white-space:nowrap;">生产方：</div>
<div style="position:absolute;left:2449.5px;top:930.50px;line-height:30.0px;font-size:20px;color:#000;font-weight:350;font-family:'Liberation Sans', sans-serif;white-space:nowrap;">40件</div>
<div style="position:absolute;left:2443px;top:954.50px;line-height:30.0px;font-size:20px;color:#000;font-weight:350;font-family:'Liberation Sans', sans-serif;white-space:nowrap;">(40件)</div>
<div style="position:absolute;left:1509px;top:997px;width:1073px;height:2px;background:#e0e0e0;"></div>
<div style="position:absolute;left:2327.5px;top:998.50px;line-height:30.0px;font-size:20px;color:#000;font-weight:350;font-family:'Liberation Sans', sans-serif;white-space:nowrap;">40</div>
<div style="position:absolute;left:1529.5px;top:1076.80px;line-height:42.0px;font-size:28px;color:#000;font-weight:350;font-family:'Liberation Sans', sans-serif;white-space:nowrap;letter-spacing:-0.17px">LCDCJY2508150184110</div>
<svg style="position:absolute;left:2118px;top:1059px" width="446" height="78.5" viewBox="0 0 200 1" preserveAspectRatio="none" shape-rendering="crispEdges"><rect x="0" width="2" height="1"/><rect x="3" width="1" height="1"/><rect x="6" width="1" height="1"/><rect x="11" width="1" height="1"/><rect x="15" width="2" height="1"/><rect x="18" width="3" height="1"/><rect x="22" width="1" height="1"/><rect x="26" width="1" height="1"/><rect x="30" width="2" height="1"/><rect x="33" width="1" height="1"/><rect x="35" width="2" height="1"/><rect x="40" width="1" height="1"/><rect x="44" width="1" height="1"/><rect x="48" width="1" height="1"/><rect x="52" width="2" height="1"/><rect x="55" width="1" height="1"/><rect x="57" width="2" height="1"/><rect x="60" width="3" height="1"/><rect x="66" width="3" height="1"/><rect x="70" width="2" height="1"/><rect x="73" width="1" height="1"/><rect x="77" width="1" height="1"/><rect x="79" width="3" height="1"/><rect x="83" width="4" height="1"/><rect x="88" width="3" height="1"/><rect x="93" width="1" height="1"/><rect x="95" width="2" height="1"/><rect x="99" width="1" height="1"/><rect x="103" width="2" height="1"/><rect x="107" width="1" height="1"/><rect x="110" width="1" height="1"/><rect x="112" width="3" height="1"/><rect x="117" width="2" height="1"/><rect x="121" width="2" height="1"/><rect x="125" width="2" height="1"/><rect x="128" width="2" height="1"/><rect x="132" width="1" height="1"/><rect x="135" width="4" height="1"/><rect x="140" width="1" height="1"/><rect x="143" width="2" height="1"/><rect x="148" width="1" height="1"/><rect x="151" width="1" height="1"/><rect x="154" width="1" height="1"/><rect x="156" width="4" height="1"/><rect x="161" width="3" height="1"/><rect x="165" width="1" height="1"/><rect x="168" width="3" height="1"/><rect x="172" width="2" height="1"/><rect x="176" width="1" height="1"/><rect x="180" width="1" height="1"/><rect x="182" width="4" height="1"/><rect x="187" width="2" height="1"/><rect x="192" width="3" height="1"/><rect x="196" width="1" height="1"/><rect x="198" width="2" height="1"/></svg><div style="position:absolute;left:1521.5px;top:1180.50px;line-height:30.0px;font-size:20px;color:#000;font-weight:350;font-family:'Liberation Sans', sans-serif;white-space:nowrap;width:50px;text-align:center">2</div>
<div style="position:absolute;left:1601.5px;top:1169.50px;line-height:30.0px;font-size:20px;color:#000;font-weight:350;font-family:'Liberation Sans', sans-serif;white-space:nowrap;">&nbsp;964-123 -52-90-1P袜子</div>
<div style="position:absolute;left:1601.5px;top:1193.00px;line-height:30.0px;font-size:20px;color:#000;font-weight:350;font-family:'Liberation Sans', sans-serif;white-space:nowrap;">964-123 -52-90-52-90-TYO-1P袜子</div>
<div style="position:absolute;left:2106px;top:1162.50px;line-height:22.6px;font-size:20px;color:#000;font-weight:350;font-family:'Liberation Sans', sans-serif;white-space:nowrap;">生产批号：</div>
<div style="position:absolute;left:2106px;top:1185.20px;line-height:22.6px;font-size:20px;color:#000;font-weight:350;font-family:'Liberation Sans', sans-serif;white-space:nowrap;">PO单号：</div>
<div style="position:absolute;left:2106px;top:1207.70px;line-height:22.6px;font-size:20px;color:#000;font-weight:350;font-family:'Liberation Sans', sans-serif;white-space:nowrap;">生产方：</div>
<div style="position:absolute;left:2449.5px;top:1170.50px;line-height:30.0px;font-size:20px;color:#000;font-weight:350;font-family:'Liberation Sans', sans-serif;white-space:nowrap;">40件</div>
<div style="position:absolute;left:2443px;top:1194.50px;line-height:30.0px;font-size:20px;color:#000;font-weight:350;font-family:'Liberation Sans', sans-serif;white-space:nowrap;">(40件)</div>
<div style="position:absolute;left:1509px;top:1237px;width:1073px;height:2px;background:#e0e0e0;"></div>
<div style="position:absolute;left:2327.5px;top:1238.50px;line-height:30.0px;font-size:20px;color:#000;font-weight:350;font-family:'Liberation Sans', sans-serif;white-space:nowrap;">40</div>
<div style="position:absolute;left:1529.5px;top:1316.80px;line-height:42.0px;font-size:28px;color:#000;font-weight:350;font-family:'Liberation Sans', sans-serif;white-space:nowrap;letter-spacing:-0.17px">LCDCJY2508150184111</div>
<svg style="position:absolute;left:2118px;top:1299px" width="446" height="78.5" viewBox="0 0 200 1" preserveAspectRatio="none" shape-rendering="crispEdges"><rect x="0" width="2" height="1"/><rect x="3" width="1" height="1"/><rect x="6" width="1" height="1"/><rect x="11" width="1" height="1"/><rect x="15" width="2" height="1"/><rect x="18" width="3" height="1"/><rect x="22" width="1" height="1"/><rect x="26" width="1" height="1"/><rect x="30" width="2" height="1"/><rect x="33" width="1" height="1"/><rect x="35" width="2" height="1"/><rect x="40" width="1" height="1"/><rect x="44" width="1" height="1"/><rect x="48" width="1" height="1"/><rect x="52" width="2" height="1"/><rect x="55" width="1" height="1"/><rect x="57" width="2" height="1"/><rect x="60" width="3" height="1"/><rect x="66" width="3" height="1"/><rect x="70" width="2" height="1"/><rect x="73" width="1" height="1"/><rect x="77" width="1" height="1"/><rect x="79" width="3" height="1"/><rect x="83" width="4" height="1"/><rect x="88" width="3" height="1"/><rect x="93" width="1" height="1"/><rect x="95" width="2" height="1"/><rect x="99" width="1" height="1"/><rect x="103" width="2" height="1"/><rect x="107" width="1" height="1"/><rect x="110" width="1" height="1"/><rect x="112" width="3" height="1"/><rect x="117" width="2" height="1"/><rect x="121" width="2" height="1"/><rect x="125" width="2" height="1"/><rect x="128" width="2" height="1"/><rect x="132" width="1" height="1"/><rect x="135" width="4" height="1"/><rect x="140" width="1" height="1"/><rect x="143" width="2" height="1"/><rect x="148" width="1" height="1"/><rect x="151" width="1" height="1"/><rect x="154" width="1" height="1"/><rect x="156" width="4" height="1"/><rect x="161" width="3" height="1"/><rect x="165" width="1" height="1"/><rect x="168" width="3" height="1"/><rect x="173" width="2" height="1"/><rect x="176" width="1" height="1"/><rect x="179" width="2" height="1"/><rect x="183" width="1" height="1"/><rect x="187" width="2" height="1"/><rect x="192" width="3" height="1"/><rect x="196" width="1" height="1"/><rect x="198" width="2" height="1"/></svg><div style="position:absolute;left:1521.5px;top:1420.50px;line-height:30.0px;font-size:20px;color:#000;font-weight:350;font-family:'Liberation Sans', sans-serif;white-space:nowrap;width:50px;text-align:center">3</div>
<div style="position:absolute;left:1601.5px;top:1409.50px;line-height:30.0px;font-size:20px;color:#000;font-weight:350;font-family:'Liberation Sans', sans-serif;white-space:nowrap;">&nbsp;964-123 -52-90-1P袜子</div>
<div style="position:absolute;left:1601.5px;top:1433.00px;line-height:30.0px;font-size:20px;color:#000;font-weight:350;font-family:'Liberation Sans', sans-serif;white-space:nowrap;">964-123 -52-90-52-90-TYO-1P袜子</div>
<div style="position:absolute;left:2106px;top:1402.50px;line-height:22.6px;font-size:20px;color:#000;font-weight:350;font-family:'Liberation Sans', sans-serif;white-space:nowrap;">生产批号：</div>
<div style="position:absolute;left:2106px;top:1425.20px;line-height:22.6px;font-size:20px;color:#000;font-weight:350;font-family:'Liberation Sans', sans-serif;white-space:nowrap;">PO单号：</div>
<div style="position:absolute;left:2106px;top:1447.70px;line-height:22.6px;font-size:20px;color:#000;font-weight:350;font-family:'Liberation Sans', sans-serif;white-space:nowrap;">生产方：</div>
<div style="position:absolute;left:2449.5px;top:1410.50px;line-height:30.0px;font-size:20px;color:#000;font-weight:350;font-family:'Liberation Sans', sans-serif;white-space:nowrap;">40件</div>
<div style="position:absolute;left:2443px;top:1434.50px;line-height:30.0px;font-size:20px;color:#000;font-weight:350;font-family:'Liberation Sans', sans-serif;white-space:nowrap;">(40件)</div>
<div style="position:absolute;left:1509px;top:1477px;width:1073px;height:2px;background:#e0e0e0;"></div>
<div style="position:absolute;left:2327.5px;top:1478.50px;line-height:30.0px;font-size:20px;color:#000;font-weight:350;font-family:'Liberation Sans', sans-serif;white-space:nowrap;">40</div>
<div style="position:absolute;left:1529.5px;top:1556.80px;line-height:42.0px;font-size:28px;color:#000;font-weight:350;font-family:'Liberation Sans', sans-serif;white-space:nowrap;letter-spacing:-0.17px">LCDCJY2508150184112</div>
<svg style="position:absolute;left:2118px;top:1539px" width="446" height="78.5" viewBox="0 0 200 1" preserveAspectRatio="none" shape-rendering="crispEdges"><rect x="0" width="2" height="1"/><rect x="3" width="1" height="1"/><rect x="6" width="1" height="1"/><rect x="11" width="1" height="1"/><rect x="15" width="2" height="1"/><rect x="18" width="3" height="1"/><rect x="22" width="1" height="1"/><rect x="26" width="1" height="1"/><rect x="30" width="2" height="1"/><rect x="33" width="1" height="1"/><rect x="35" width="2" height="1"/><rect x="40" width="1" height="1"/><rect x="44" width="1" height="1"/><rect x="48" width="1" height="1"/><rect x="52" width="2" height="1"/><rect x="55" width="1" height="1"/><rect x="57" width="2" height="1"/><rect x="60" width="3" height="1"/><rect x="66" width="3" height="1"/><rect x="70" width="2" height="1"/><rect x="73" width="1" height="1"/><rect x="77" width="1" height="1"/><rect x="79" width="3" height="1"/><rect x="83" width="4" height="1"/><rect x="88" width="3" height="1"/><rect x="93" width="1" height="1"/><rect x="95" width="2" height="1"/><rect x="99" width="1" height="1"/><rect x="103" width="2" height="1"/><rect x="107" width="1" height="1"/><rect x="110" width="1" height="1"/><rect x="112" width="3" height="1"/><rect x="117" width="2" height="1"/><rect x="121" width="2" height="1"/><rect x="125" width="2" height="1"/><rect x="128" width="2" height="1"/><rect x="132" width="1" height="1"/><rect x="135" width="4" height="1"/><rect x="140" width="1" height="1"/><rect x="143" width="2" height="1"/><rect x="148" width="1" height="1"/><rect x="151" width="1" height="1"/><rect x="154" width="1" height="1"/><rect x="156" width="4" height="1"/><rect x="161" width="3" height="1"/><rect x="165" width="2" height="1"/><rect x="169" width="3" height="1"/><rect x="174" width="1" height="1"/><rect x="176" width="2" height="1"/><rect x="179" width="3" height="1"/><rect x="184" width="1" height="1"/><rect x="187" width="2" height="1"/><rect x="192" width="3" height="1"/><rect x="196" width="1" height="1"/><rect x="198" width="2" height="1"/></svg><div style="position:absolute;left:1521.5px;top:1660.50px;line-height:30.0px;font-size:20px;color:#000;font-weight:350;font-family:'Liberation Sans', sans-serif;white-space:nowrap;width:50px;text-align:center">4</div>
<div style="position:absolute;left:1601.5px;top:1649.50px;line-height:30.0px;font-size:20px;color:#000;font-weight:350;font-family:'Liberation Sans', sans-serif;white-space:nowrap;">&nbsp;964-123 -52-90-1P袜子</div>
<div style="position:absolute;left:1601.5px;top:1673.00px;line-height:30.0px;font-size:20px;color:#000;font-weight:350;font-family:'Liberation Sans', sans-serif;white-space:nowrap;">964-123 -52-90-52-90-TYO-1P袜子</div>
<div style="position:absolute;left:2106px;top:1642.50px;line-height:22.6px;font-size:20px;color:#000;font-weight:350;font-family:'Liberation Sans', sans-serif;white-space:nowrap;">生产批号：</div>
<div style="position:absolute;left:2106px;top:1665.20px;line-height:22.6px;font-size:20px;color:#000;font-weight:350;font-family:'Liberation Sans', sans-serif;white-space:nowrap;">PO单号：</div>
<div style="position:absolute;left:2106px;top:1687.70px;line-height:22.6px;font-size:20px;color:#000;font-weight:350;font-family:'Liberation Sans', sans-serif;white-space:nowrap;">生产方：</div>
<div style="position:absolute;left:2449.5px;top:1650.50px;line-height:30.0px;font-size:20px;color:#000;font-weight:350;font-family:'Liberation Sans', sans-serif;white-space:nowrap;">40件</div>
<div style="position:absolute;left:2443px;top:1674.50px;line-height:30.0px;font-size:20px;color:#000;font-weight:350;font-family:'Liberation Sans', sans-serif;white-space:nowrap;">(40件)</div>
<div style="position:absolute;left:1509px;top:1717px;width:1073px;height:2px;background:#e0e0e0;"></div>
<div style="position:absolute;left:2327.5px;top:1718.50px;line-height:30.0px;font-size:20px;color:#000;font-weight:350;font-family:'Liberation Sans', sans-serif;white-space:nowrap;">40</div>

</div>
</body></html>
